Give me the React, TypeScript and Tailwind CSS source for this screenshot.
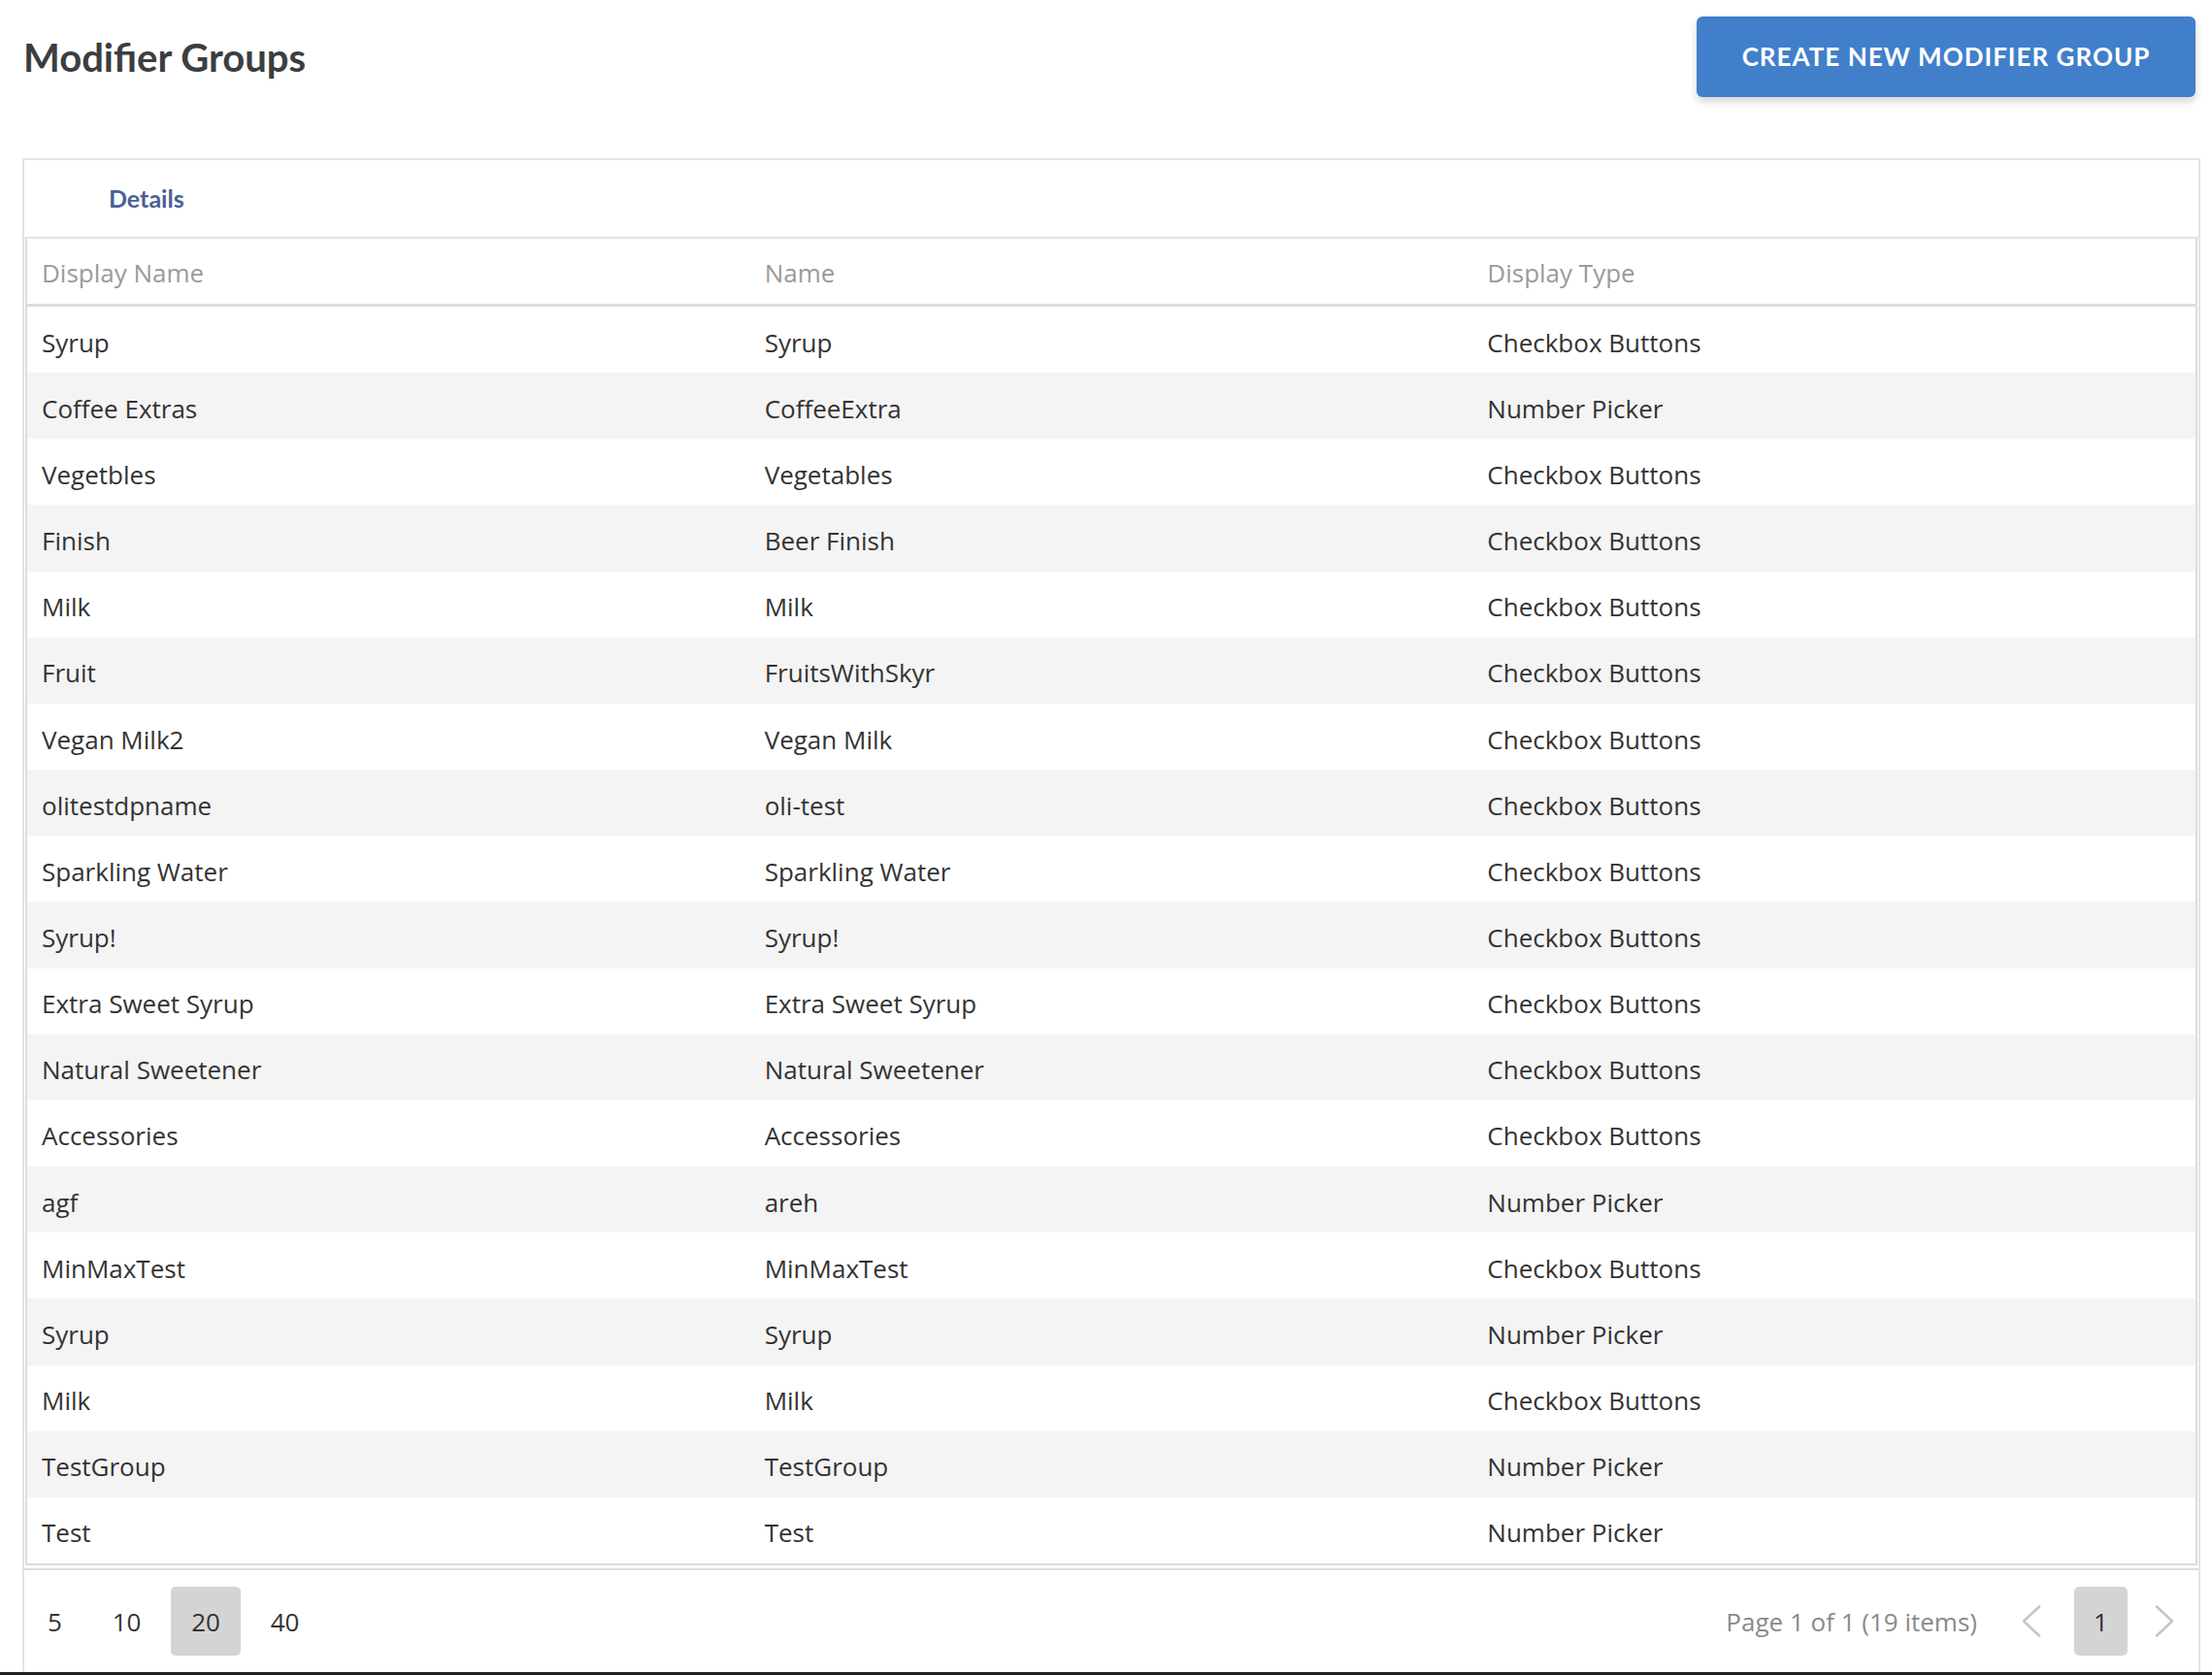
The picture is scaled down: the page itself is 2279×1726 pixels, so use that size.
const rows = [
  { displayName: 'Syrup', name: 'Syrup', type: 'Checkbox Buttons' },
  { displayName: 'Coffee Extras', name: 'CoffeeExtra', type: 'Number Picker' },
  { displayName: 'Vegetbles', name: 'Vegetables', type: 'Checkbox Buttons' },
  { displayName: 'Finish', name: 'Beer Finish', type: 'Checkbox Buttons' },
  { displayName: 'Milk', name: 'Milk', type: 'Checkbox Buttons' },
  { displayName: 'Fruit', name: 'FruitsWithSkyr', type: 'Checkbox Buttons' },
  { displayName: 'Vegan Milk2', name: 'Vegan Milk', type: 'Checkbox Buttons' },
  { displayName: 'olitestdpname', name: 'oli-test', type: 'Checkbox Buttons' },
  { displayName: 'Sparkling Water', name: 'Sparkling Water', type: 'Checkbox Buttons' },
  { displayName: 'Syrup!', name: 'Syrup!', type: 'Checkbox Buttons' },
  { displayName: 'Extra Sweet Syrup', name: 'Extra Sweet Syrup', type: 'Checkbox Buttons' },
  { displayName: 'Natural Sweetener', name: 'Natural Sweetener', type: 'Checkbox Buttons' },
  { displayName: 'Accessories', name: 'Accessories', type: 'Checkbox Buttons' },
  { displayName: 'agf', name: 'areh', type: 'Number Picker' },
  { displayName: 'MinMaxTest', name: 'MinMaxTest', type: 'Checkbox Buttons' },
  { displayName: 'Syrup', name: 'Syrup', type: 'Number Picker' },
  { displayName: 'Milk', name: 'Milk', type: 'Checkbox Buttons' },
  { displayName: 'TestGroup', name: 'TestGroup', type: 'Number Picker' },
  { displayName: 'Test', name: 'Test', type: 'Number Picker' },
]

const pageSizes = [5, 10, 20, 40]

const Chevron = ({ dir }: { dir: 'left' | 'right' }) => (
  <svg width="20" height="33" viewBox="0 0 20 33" fill="none" stroke="#c6c6c6" strokeWidth="2.6" strokeLinecap="round" strokeLinejoin="round">
    {dir === 'left' ? <polyline points="18,1.5 2,16.5 18,31.5" /> : <polyline points="2,1.5 18,16.5 2,31.5" />}
  </svg>
)

const App = () => {
  return (
    <div className="flex h-[1726px] flex-col overflow-hidden bg-white font-['Open_Sans',sans-serif]">
      <div className="flex min-h-0 flex-1 flex-col pl-[23px] pr-[12px]">
        <div className="flex items-center justify-between pt-[17px]">
          <h1 className="pl-[1px] font-['Lato',sans-serif] text-[40px] font-bold leading-none text-[#3b3e41]">
            Modifier Groups
          </h1>
          <button className="mr-[5px] h-[83px] w-[514px] rounded-[6px] bg-[#417fcb] font-['Lato',sans-serif] text-[26px] font-bold tracking-[1px] text-white shadow-[0_4px_8px_rgba(0,0,0,0.18)]">
            CREATE NEW MODIFIER GROUP
          </button>
        </div>

        <div className="mt-[63px] flex min-h-0 flex-1 flex-col border-x-2 border-t-2 border-[#e3e2ec]">
          <div className="flex h-[81px] items-center border-b-2 border-[#e3e2ec] pl-[87px]">
            <span className="font-['Lato',sans-serif] text-[25px] font-bold text-[#4a6191]">Details</span>
          </div>

          <div className="mx-[1px] border-x-2 border-b-2 border-[#dcdcdc] text-[26px]">
            <div className="grid h-[70px] grid-cols-3 items-center border-b-[3px] border-[#dcdcdc] pt-[4px] text-[#9a9a9a]">
              <div className="pl-[15px]">Display Name</div>
              <div className="pl-[15px]">Name</div>
              <div className="pl-[15px]">Display Type</div>
            </div>
            {rows.map((row, i) => (
              <div
                key={i}
                className={`grid h-[68.16px] grid-cols-3 items-center pt-[6px] text-[#333333] ${i % 2 === 1 ? 'bg-[#f4f4f4]' : 'bg-white'}`}
              >
                <div className="pl-[15px]">{row.displayName}</div>
                <div className="pl-[15px]">{row.name}</div>
                <div className="pl-[15px]">{row.type}</div>
              </div>
            ))}
          </div>

          <div className="mt-[3px] flex flex-1 items-center justify-between border-t-2 border-[#dcdcdc] pl-[3px] pr-[25px] text-[26px]">
            <div className="flex items-center gap-[9.5px]">
              {pageSizes.map((size) => (
                <div
                  key={size}
                  className={`flex h-[71px] items-center justify-center rounded-[5px] pt-[2px] text-[#333333] ${size === 5 ? 'w-[57px]' : 'w-[72px]'} ${size === 20 ? 'bg-[#d4d4d4]' : ''}`}
                >
                  {size}
                </div>
              ))}
            </div>
            <div className="flex items-center">
              <span className="pt-[2px] text-[#8a8a8a]">Page 1 of 1 (19 items)</span>
              <div className="ml-[46px] flex items-center">
                <Chevron dir="left" />
              </div>
              <div className="ml-[34px] flex h-[71px] w-[55px] items-center justify-center rounded-[5px] bg-[#d4d4d4] pt-[2px] text-[#333333]">
                1
              </div>
              <div className="ml-[28px] flex items-center">
                <Chevron dir="right" />
              </div>
            </div>
          </div>
        </div>
      </div>
      <div className="h-[3px] bg-[#1e1e1e]" />
    </div>
  )
}

export default App
